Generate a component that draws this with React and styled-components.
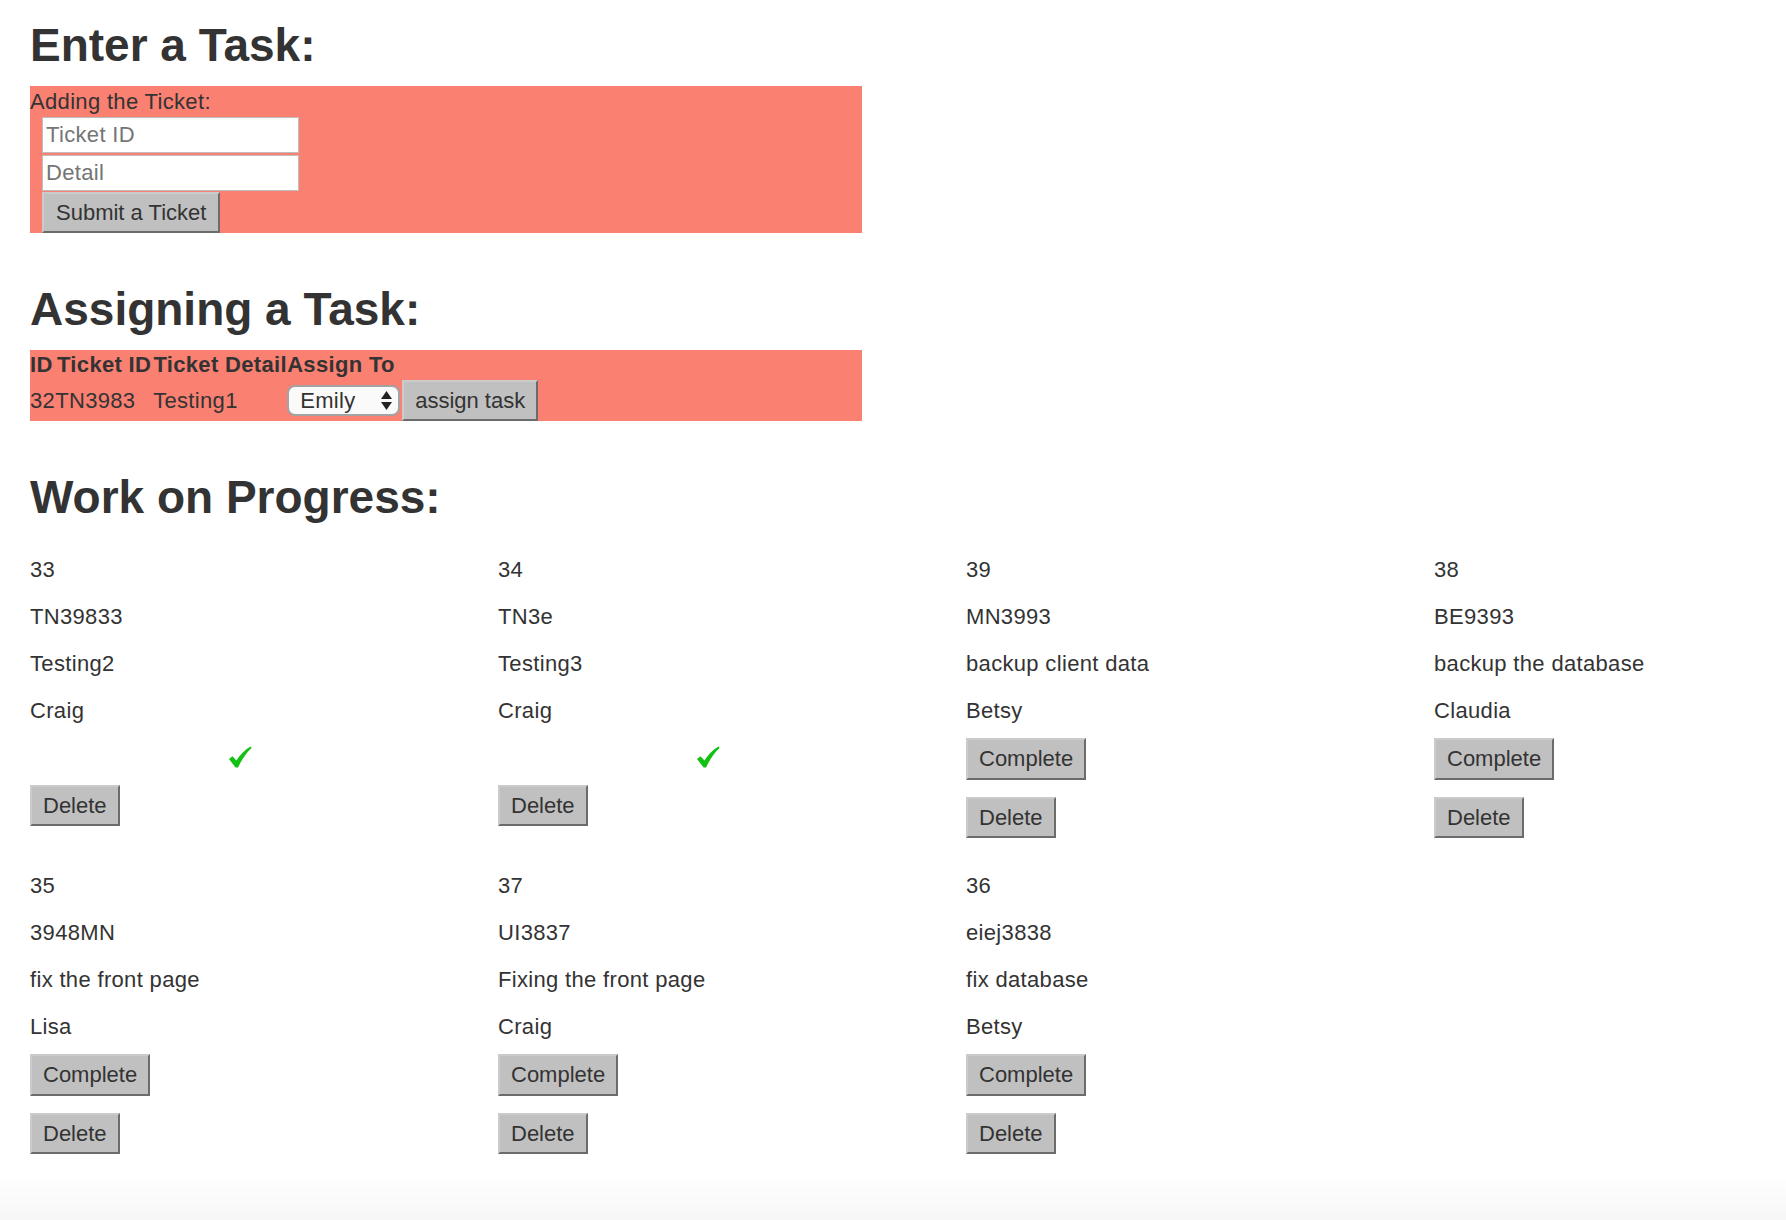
import React from "react";
import styled, { createGlobalStyle } from "styled-components";

const GlobalStyle = createGlobalStyle`
  html, body {
    margin: 0;
    padding: 0;
  }
  body {
    font-family: "Liberation Sans", Arial, Helvetica, sans-serif;
    font-size: 22px;
    line-height: 31.4px;
    letter-spacing: 0.33px;
    color: #333;
    background: #fff;
  }
`;

const Page = styled.div`
  min-height: 100vh;
  box-sizing: border-box;
  padding: 0 0 16px 30px;
  background: linear-gradient(to bottom, #fff calc(100% - 66px), #f3f3f3 100%);
`;

const Heading = styled.h2`
  font-size: 46px;
  font-weight: 700;
  line-height: 1.1;
  letter-spacing: 0;
  margin: 51px 0 15px;
  color: #333;

  &:first-child {
    margin-top: 20px;
  }
`;

const Panel = styled.div`
  width: 832px;
  background-color: #fa8072;
`;

const Fields = styled.div`
  display: flex;
  flex-direction: column;
  align-items: flex-start;
  gap: 2px;
  padding-left: 12px;
`;

const Input = styled.input`
  width: 257px;
  height: 36px;
  box-sizing: border-box;
  margin: 0;
  border: 1px solid #bdbdbd;
  outline: none;
  padding: 0 3px;
  font-family: inherit;
  font-size: 22px;
  letter-spacing: 0.33px;
  color: #333;
  background: #fff;

  &::placeholder {
    color: #757575;
  }
`;

const Button = styled.button`
  display: block;
  margin: 0;
  font-family: inherit;
  font-size: 22px;
  line-height: 31.4px;
  letter-spacing: 0;
  color: #333;
  background-color: #c0c0c0;
  padding: 3px ${(p) => (p.$wide ? 12 : 11)}px;
  border: 2px solid;
  border-color: #cbcbcb #6b6b6b #6b6b6b #cbcbcb;
  border-radius: 0;
  cursor: pointer;
`;

const AssignTable = styled.table`
  border-collapse: collapse;
  border-spacing: 0;
`;

const Th = styled.th`
  width: ${(p) => p.$w}px;
  padding: 0;
  font-weight: 700;
  line-height: 30px;
  text-align: ${(p) => (p.$left ? "left" : "center")};
  white-space: nowrap;
`;

const Td = styled.td`
  padding: 0;
  text-align: left;
  vertical-align: middle;
  white-space: nowrap;
`;

const SelectWrap = styled.div`
  position: relative;
  width: 113px;
`;

const Select = styled.select`
  appearance: none;
  display: block;
  width: 113px;
  height: 31px;
  box-sizing: border-box;
  margin: 0;
  border: 2px solid #a3a3a3;
  border-radius: 8px;
  background: #fafafa;
  font-family: inherit;
  font-size: 22px;
  letter-spacing: 0.33px;
  color: #333;
  padding: 0 0 0 11px;
  outline: none;
`;

const Arrows = styled.svg`
  position: absolute;
  right: 8px;
  top: 6px;
  pointer-events: none;
`;

const Board = styled.div`
  display: grid;
  grid-template-columns: repeat(3, 468px) 1fr;
  align-items: start;
`;

const Card = styled.div`
  padding: 16px 0;
  display: flex;
  flex-direction: column;
  align-items: flex-start;
`;

const Lines = styled.div`
  display: flex;
  flex-direction: column;
  gap: 15.7px;
`;

const Line = styled.p`
  margin: 0;
`;

const Actions = styled.div`
  margin-top: 11.6px;
  display: flex;
  flex-direction: column;
  align-items: flex-start;
  gap: 17px;
`;

const Done = styled.div`
  height: 29.4px;
  padding-left: 198px;
  padding-top: 7px;
  box-sizing: border-box;
`;

const CheckMark = () => (
  <svg width="24" height="22" viewBox="0 0 24 22">
    <path
      d="M1 13 L4.5 10.3 L8.4 14.6 C12 8.8 16.5 3.8 22.6 0.4 L23.6 1.9 C18.2 6.8 13.6 13.4 10.1 21.6 L7.6 21.6 Z"
      fill="#12c112"
    />
  </svg>
);

const tasks = [
  { id: 33, ticket: "TN39833", detail: "Testing2", who: "Craig", done: true },
  { id: 34, ticket: "TN3e", detail: "Testing3", who: "Craig", done: true },
  { id: 39, ticket: "MN3993", detail: "backup client data", who: "Betsy" },
  { id: 38, ticket: "BE9393", detail: "backup the database", who: "Claudia" },
  { id: 35, ticket: "3948MN", detail: "fix the front page", who: "Lisa" },
  { id: 37, ticket: "UI3837", detail: "Fixing the front page", who: "Craig" },
  { id: 36, ticket: "eiej3838", detail: "fix database", who: "Betsy" },
];

function TaskCard({ task }) {
  return (
    <Card>
      <Lines>
        <Line>{task.id}</Line>
        <Line>{task.ticket}</Line>
        <Line>{task.detail}</Line>
        <Line>{task.who}</Line>
      </Lines>
      <Actions>
        {task.done ? (
          <Done>
            <CheckMark />
          </Done>
        ) : (
          <Button>Complete</Button>
        )}
        <Button>Delete</Button>
      </Actions>
    </Card>
  );
}

export default function App() {
  return (
    <>
      <GlobalStyle />
      <Page>
        <Heading>Enter a Task:</Heading>
        <Panel>
          <div>Adding the Ticket:</div>
          <Fields>
            <Input placeholder="Ticket ID" />
            <Input placeholder="Detail" />
            <Button $wide style={{ marginTop: -1 }}>
              Submit a Ticket
            </Button>
          </Fields>
        </Panel>

        <Heading>Assigning a Task:</Heading>
        <Panel>
          <AssignTable>
            <thead>
              <tr>
                <Th $w={25} $left>
                  ID
                </Th>
                <Th $w={98}>Ticket ID</Th>
                <Th $w={134}>Ticket Detail</Th>
                <Th $w={115} $left>
                  Assign To
                </Th>
              </tr>
            </thead>
            <tbody>
              <tr>
                <Td>32</Td>
                <Td>TN3983</Td>
                <Td>Testing1</Td>
                <Td>
                  <SelectWrap>
                    <Select defaultValue="Emily">
                      <option>Emily</option>
                      <option>Craig</option>
                      <option>Betsy</option>
                      <option>Claudia</option>
                      <option>Lisa</option>
                    </Select>
                    <Arrows width="11" height="19" viewBox="0 0 11 19">
                      <path d="M5.5 0 L11 8 L0 8 Z" fill="#222" />
                      <path d="M0 11 L11 11 L5.5 19 Z" fill="#222" />
                    </Arrows>
                  </SelectWrap>
                </Td>
                <Td>
                  <Button>assign task</Button>
                </Td>
              </tr>
            </tbody>
          </AssignTable>
        </Panel>

        <Heading>Work on Progress:</Heading>
        <Board>
          {tasks.map((t) => (
            <TaskCard key={t.id} task={t} />
          ))}
        </Board>
      </Page>
    </>
  );
}
